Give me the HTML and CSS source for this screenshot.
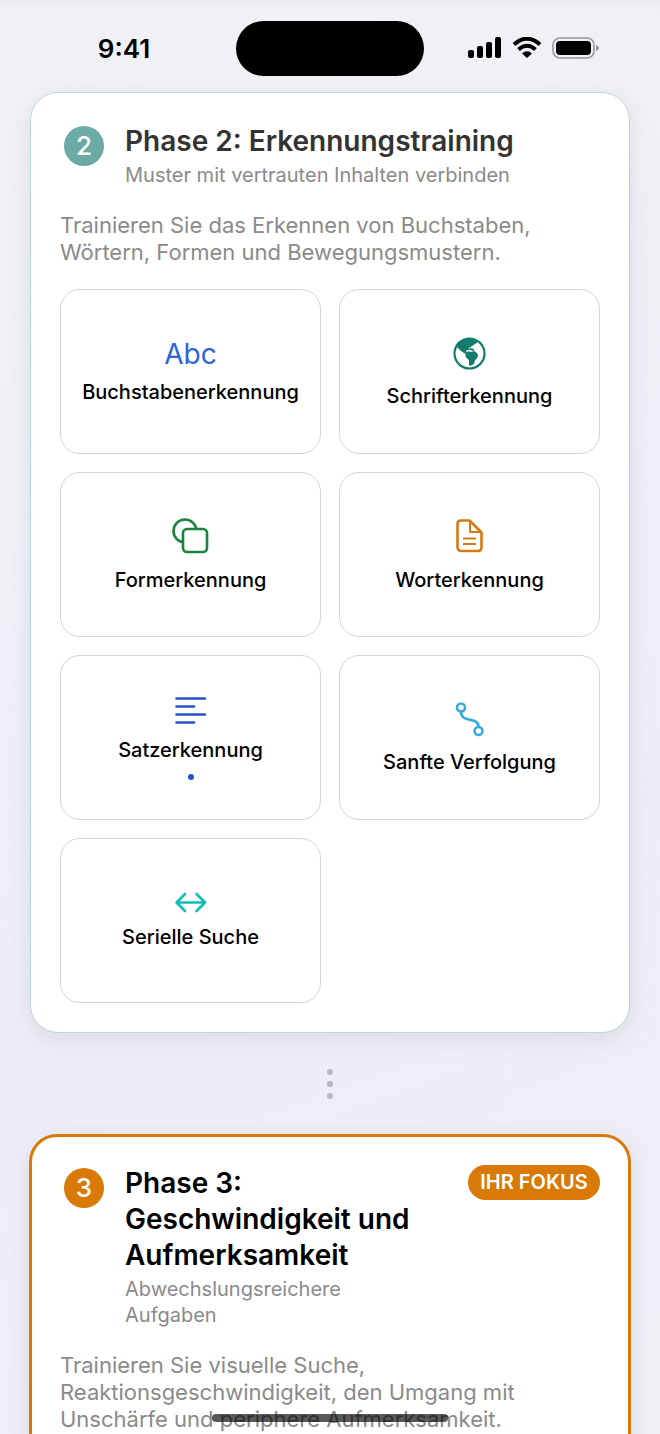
FILE: index.html
```html
<!DOCTYPE html>
<html lang="de">
<head>
    <meta charset="UTF-8">
    <meta name="viewport" content="width=device-width, initial-scale=1.0">
    <title>Trainingsphasen</title>
    <link rel="stylesheet" href="styles.css">
</head>
<body>

<header class="status-bar">
    <div class="time">9:41</div>
    <div class="island"></div>
    <div class="status-icons">
        <svg width="34" height="22" viewBox="0 0 34 22">
            <rect x="0" y="13" width="6" height="8" rx="2"/>
            <rect x="9" y="9" width="6" height="12" rx="2"/>
            <rect x="18" y="5" width="6" height="16" rx="2"/>
            <rect x="27" y="0" width="6" height="21" rx="2"/>
        </svg>
        <svg width="30" height="22" viewBox="0 0 30 22" fill="none" stroke="#000" stroke-width="4">
            <path d="M2 7.500Q15-4 28 7.500"/>
            <path d="M6.500 12.500Q15 5 23.500 12.500"/>
            <path d="M10 16.500Q15 12 20 16.500L15 21Z" fill="#000" stroke="none"/>
        </svg>
        <svg width="48" height="22" viewBox="0 0 48 22">
            <rect x="1" y="1" width="41" height="20" rx="7" fill="none" stroke="#96969b" stroke-width="1.600"/>
            <rect x="4" y="4" width="35" height="14" rx="4"/>
            <path d="M44 8Q47 9 47 11T44 14Z" fill="#96969b"/>
        </svg>
    </div>
</header>

<main>
    <section class="card">
        <div class="card-header">
            <span class="number">2</span>
            <div class="heading">
                <h2>Phase 2: Erkennungstraining</h2>
                <p class="subtitle">Muster mit vertrauten Inhalten verbinden</p>
            </div>
        </div>
        <p class="description">Trainieren Sie das Erkennen von Buchstaben, Wörtern, Formen und Bewegungsmustern.</p>

        <div class="tiles">
            <button type="button" class="tile">
                <span class="abc">Abc</span>
                <span>Buchstabenerkennung</span>
            </button>
            <button type="button" class="tile">
                <svg width="36" height="36" viewBox="0 0 36 36">
                    <circle cx="17.500" cy="17.500" r="15" fill="none" stroke="#137d6d" stroke-width="2.200"/>
                    <path d="M4 10Q8 2 18 2.500Q23 3 26 6L23 8L20 10L17 12L18 14L15 14L14 16L17 18L15 19L9 15L6 12Z" fill="#137d6d"/>
                    <path d="M14 17Q16 14 19 16L22 15Q26 17 26 20Q25 23 23 24L22 28L18 30L17 29L17 24Q12 21 14 17ZM18 12L22 13L22 15L18 14Z" fill="#137d6d"/>
                </svg>
                <span>Schrifterkennung</span>
            </button>
            <button type="button" class="tile">
                <svg width="38" height="38" viewBox="0 0 38 38" stroke="#1b8240" stroke-width="2.600" fill="none">
                    <circle cx="13" cy="13" r="11.500"/>
                    <rect x="11" y="11" width="24" height="23" rx="4" fill="#fff"/>
                </svg>
                <span>Formerkennung</span>
            </button>
            <button type="button" class="tile">
                <svg width="38" height="38" viewBox="0 0 38 38" stroke="#d57b12" stroke-width="2.600" fill="none" stroke-linejoin="round">
                    <path d="M10 2.500H18.500L30.500 14.500V29Q30.500 33 27 33H10Q6.500 33 6.500 29V6Q6.500 2.500 10 2.500Z"/>
                    <path d="M19 2.500V14H30M12 20.500H25M12 26H25" stroke-width="2"/>
                </svg>
                <span>Worterkennung</span>
            </button>
            <button type="button" class="tile">
                <svg width="34" height="30" viewBox="0 0 34 30" stroke="#2553c5" stroke-width="2.600" stroke-linecap="round">
                    <path d="M2.500 2.500H31M2.500 10.500H20M2.500 18.500H31M2.500 26.500H20"/>
                </svg>
                <span>Satzerkennung</span>
                <i class="marker"></i>
            </button>
            <button type="button" class="tile">
                <svg width="30" height="36" viewBox="0 0 30 36" stroke="#38a9db" stroke-width="2.600" fill="none">
                    <circle cx="6" cy="5.500" r="4"/>
                    <circle cx="23.500" cy="29" r="4"/>
                    <path d="M6 9.500C6 22 24 14 23.500 25"/>
                </svg>
                <span>Sanfte Verfolgung</span>
            </button>
            <button type="button" class="tile">
                <svg width="34" height="21" viewBox="0 0 34 21" stroke="#13bdb5" stroke-width="2.600" fill="none" stroke-linecap="round" stroke-linejoin="round">
                    <path d="M2.500 10.500H31M11 2L2.500 10.500L11 19M22.500 2L31 10.500L22.500 19"/>
                </svg>
                <span>Serielle Suche</span>
            </button>
        </div>
    </section>

    <div class="dots">
        <i></i>
        <i></i>
        <i></i>
    </div>

    <section class="card focus">
        <div class="card-header">
            <span class="number">3</span>
            <div class="heading">
                <h2>Phase 3: Geschwindigkeit und Aufmerksamkeit</h2>
                <p class="subtitle">Abwechslungsreichere Aufgaben</p>
            </div>
            <span class="badge">IHR FOKUS</span>
        </div>
        <p class="description">Trainieren Sie visuelle Suche, Reaktionsgeschwindigkeit, den Umgang mit Unschärfe und periphere Aufmerksamkeit.</p>
    </section>
</main>

<div class="home-indicator"></div>

</body>
</html>
```
FILE: styles.css
```css
* {
    box-sizing: border-box;
}
body {
    font-family: Inter, "Liberation Sans", sans-serif;
    background: linear-gradient(160deg, #f1f1f5, #ededf7 60%, #eeeef5);
    margin: 0;
    height: 100vh;
    overflow: hidden;
}
.status-bar {
    display: grid;
    grid-template-columns: 1fr 188px 1fr;
    align-items: center;
    height: 92px;
    padding-bottom: 4px;
    padding-top: 8px;
    box-shadow: inset 0 12px 12px -10px rgba(60, 60, 90, 0.06);
}
.time {
    text-align: center;
    padding-left: 12px;
    font-size: 26px;
    font-weight: 600;
}
.island {
    height: 55px;
    border-radius: 28px;
    background-color: #000;
}
.status-icons {
    display: flex;
    justify-content: center;
    gap: 10px;
    padding-right: 16px;
}
.card {
    margin: 0 30px;
    padding: 30px 29px 29px;
    background-color: #fff;
    border: 1px solid #b9d9d5;
    border-radius: 28px;
    box-shadow: 0 6px 22px rgba(60, 60, 90, 0.1);
}
.card-header {
    display: flex;
    align-items: flex-start;
}
.number {
    flex: none;
    width: 40px;
    height: 40px;
    margin: 3px 21px 0 4px;
    border-radius: 50%;
    background-color: #6caba5;
    color: #fff;
    font-size: 26px;
    font-weight: 500;
    line-height: 40px;
    text-align: center;
}
.heading {
    flex: 1;
}
h2 {
    margin: 0 0 3px;
    color: #333;
    font-size: 28px;
    font-weight: 600;
    line-height: 36px;
}
p {
    margin: 0;
    color: #8a8a8d;
}
.subtitle {
    font-size: 20px;
    line-height: 26px;
}
.description {
    margin: 24px 0 23px;
    font-size: 22px;
    line-height: 27px;
}
.tiles {
    display: grid;
    grid-template-columns: 1fr 1fr;
    gap: 18px;
}
.tile {
    display: flex;
    flex-direction: column;
    align-items: center;
    justify-content: center;
    gap: 12px;
    height: 165px;
    padding: 0;
    background-color: #fff;
    border: 1px solid #d5d5d7;
    border-radius: 20px;
    color: #000;
    font-family: inherit;
    font-size: 20px;
    font-weight: 500;
    line-height: 24px;
}
.tile .abc {
    color: #2b63dc;
    font-size: 28px;
    font-weight: 400;
    line-height: 28px;
}
.marker {
    width: 6px;
    height: 6px;
    border-radius: 50%;
    background-color: #2553d0;
}
.dots {
    display: flex;
    flex-direction: column;
    align-items: center;
    gap: 6px;
    padding: 36px 0 35px;
}
.dots i {
    width: 6px;
    height: 6px;
    border-radius: 50%;
    background-color: #b5b5be;
}
.focus {
    margin: 0 29px;
    padding: 28px 28px 29px;
    border: 3px solid #d87908;
}
.focus .number {
    background-color: #d87908;
}
.focus h2 {
    color: #000;
}
.badge {
    flex: none;
    width: 132px;
    margin-left: 30px;
    border-radius: 18px;
    background-color: #d87908;
    color: #fff;
    font-size: 20px;
    font-weight: 600;
    line-height: 35px;
    text-align: center;
}
.home-indicator {
    position: fixed;
    bottom: 12px;
    left: 50%;
    width: 236px;
    height: 8px;
    margin-left: -118px;
    border-radius: 4px;
    background-color: rgba(0, 0, 0, 0.65);
}
```
